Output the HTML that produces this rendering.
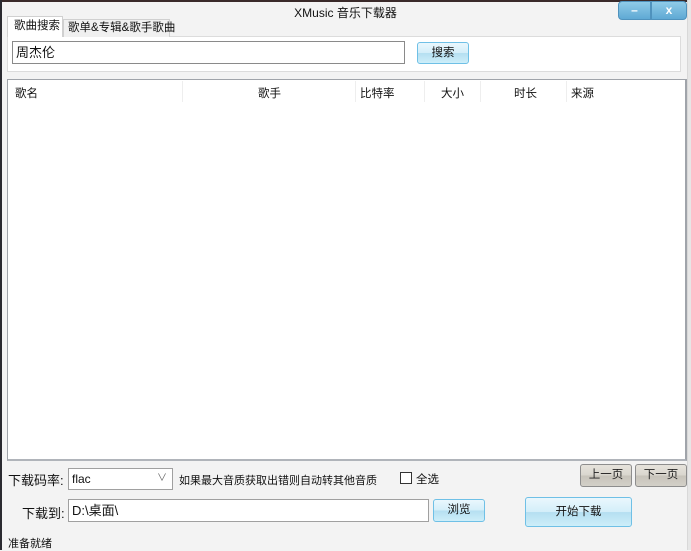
<!DOCTYPE html>
<html><head><meta charset="utf-8"><style>
*{box-sizing:border-box;margin:0;padding:0}
body{width:691px;height:550px;background:#f3f3f3;font-family:"Liberation Sans","Noto Sans CJK SC",sans-serif;font-size:12px;color:#111;position:relative;overflow:hidden}
.a{position:absolute;white-space:nowrap}
.top{left:0;top:0;width:691px;height:2px;background:#3a2a2a}
.lft{left:0;top:0;width:2px;height:550px;background:#2a2a30}
.rt{right:0;top:0;width:4px;height:550px;background:#e6e6e6;border-left:1px solid #d8d8d8}
.title{left:0;width:691px;top:4px;text-align:center;font-size:12px}
.tb{top:1px;height:19px;background:linear-gradient(#8fcbe8,#5fa9d4);border:1px solid #4f92bd;color:#fff;font-weight:bold;text-align:center;line-height:16px}
.blue{background:linear-gradient(#eaf7fd 0%,#d3eef9 50%,#b5dff1 51%,#cdeef9 100%);border:1px solid #6fc0e6;border-radius:3px;text-align:center}
.gray{background:linear-gradient(#e6e3dc 0%,#d9d6ce 50%,#c7c3ba 51%,#d3d0c8 100%);border:1px solid #8d8d8d;border-radius:3px;text-align:center;color:#222}
.inp{background:#fff;border:1px solid #a0a0a0}
</style></head><body>
<div class="a top"></div><div class="a lft"></div><div class="a rt"></div>
<div class="a title">XMusic 音乐下载器</div>
<div class="a tb" style="left:618px;width:33px;border-radius:4px 0 0 4px">–</div>
<div class="a tb" style="left:651px;width:36px;border-radius:0 4px 4px 0">x</div>
<div class="a" style="left:7px;top:36px;width:674px;height:36px;background:#fff;border:1px solid #dcdcdc"></div>
<div class="a" style="left:63px;top:19px;width:107px;height:18px;background:#f0f0f0;border:1px solid #d0d0d0;border-bottom:none;line-height:16px;padding-left:4px;font-size:11.5px">歌单&amp;专辑&amp;歌手歌曲</div>
<div class="a" style="left:7px;top:16px;width:56px;height:21px;background:#fff;border:1px solid #d0d0d0;border-bottom:none;line-height:18px;padding-left:6px;font-size:11.5px">歌曲搜索</div>
<div class="a inp" style="left:12px;top:41px;width:393px;height:23px;line-height:21px;padding-left:3px;font-size:13px;border-color:#8a8a8a">周杰伦</div>
<div class="a blue" style="left:417px;top:42px;width:52px;height:22px;line-height:20px;font-size:11.5px">搜索</div>
<div class="a" style="left:7px;top:79px;width:680px;height:382px;background:#fff;border:1px solid #a0a4aa;border-right:2px solid #a0a4aa;border-bottom:2px solid #b0b4ba"></div>
<div class="a" style="left:15px;top:85px;font-size:11.5px">歌名</div>
<div class="a" style="left:258px;top:85px;font-size:11.5px">歌手</div>
<div class="a" style="left:360px;top:85px;font-size:11.5px">比特率</div>
<div class="a" style="left:441px;top:85px;font-size:11.5px">大小</div>
<div class="a" style="left:514px;top:85px;font-size:11.5px">时长</div>
<div class="a" style="left:571px;top:85px;font-size:11.5px">来源</div>
<div class="a" style="left:182px;top:81px;width:1px;height:21px;background:#eee"></div>
<div class="a" style="left:355px;top:81px;width:1px;height:21px;background:#eee"></div>
<div class="a" style="left:424px;top:81px;width:1px;height:21px;background:#eee"></div>
<div class="a" style="left:480px;top:81px;width:1px;height:21px;background:#eee"></div>
<div class="a" style="left:566px;top:81px;width:1px;height:21px;background:#eee"></div>
<div class="a" style="left:8px;top:470px;font-size:13px">下载码率:</div>
<div class="a inp" style="left:68px;top:468px;width:105px;height:22px;line-height:20px;padding-left:3px">flac<span style="position:absolute;right:5px;top:0;color:#666;font-size:10px">∨</span></div>
<div class="a" style="left:179px;top:472px;font-size:11px">如果最大音质获取出错则自动转其他音质</div>
<div class="a" style="left:400px;top:472px;width:12px;height:12px;border:1px solid #333;background:#fff"></div>
<div class="a" style="left:416px;top:471px;font-size:11.5px">全选</div>
<div class="a gray" style="left:580px;top:464px;width:52px;height:23px;line-height:21px;font-size:11.5px">上一页</div>
<div class="a gray" style="left:635px;top:464px;width:52px;height:23px;line-height:21px;font-size:11.5px">下一页</div>
<div class="a" style="left:22px;top:503px;font-size:13px">下载到:</div>
<div class="a inp" style="left:68px;top:499px;width:361px;height:23px;line-height:21px;padding-left:3px;font-size:13px">D:\桌面\</div>
<div class="a blue" style="left:433px;top:499px;width:52px;height:23px;line-height:21px;font-size:11.5px">浏览</div>
<div class="a blue" style="left:525px;top:497px;width:107px;height:30px;line-height:28px;font-size:11.5px">开始下载</div>
<div class="a" style="left:8px;top:535px;font-size:11px">准备就绪</div>
</body></html>
